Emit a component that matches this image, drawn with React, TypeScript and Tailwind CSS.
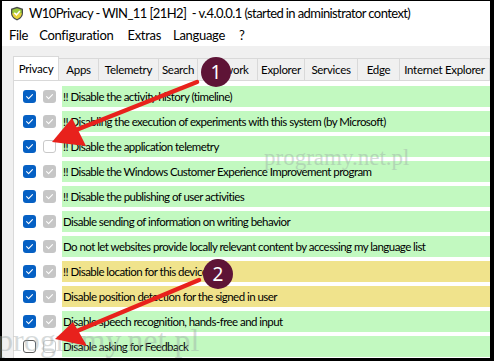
import React from 'react';

type Row = { text: string; color: 'green' | 'yellow'; a: boolean; b: boolean };

const rows: Row[] = [
  { text: '!! Disable the activity history (timeline)', color: 'green', a: true, b: true },
  { text: '!! Disabling the execution of experiments with this system (by Microsoft)', color: 'green', a: true, b: true },
  { text: '!! Disable the application telemetry', color: 'green', a: true, b: false },
  { text: '!! Disable the Windows Customer Experience Improvement program', color: 'green', a: true, b: true },
  { text: '!! Disable the publishing of user activities', color: 'green', a: true, b: true },
  { text: 'Disable sending of information on writing behavior', color: 'green', a: true, b: true },
  { text: 'Do not let websites provide locally relevant content by accessing my language list', color: 'green', a: true, b: true },
  { text: '!! Disable location for this device', color: 'yellow', a: true, b: true },
  { text: 'Disable position detection for the signed in user', color: 'yellow', a: true, b: true },
  { text: 'Disable speech recognition, hands-free and input', color: 'green', a: true, b: true },
  { text: 'Disable asking for Feedback', color: 'green', a: false, b: false },
];

const tabs = [
  { name: 'Apps', w: 'w-[40px]' },
  { name: 'Telemetry', w: 'w-[60px]' },
  { name: 'Search', w: 'w-[39px]' },
  { name: 'Network', w: 'w-[60px]' },
  { name: 'Explorer', w: 'w-[47px]' },
  { name: 'Services', w: 'w-[53px]' },
  { name: 'Edge', w: 'w-[42px]' },
  { name: 'Internet Explorer', w: 'w-[90px]' },
];

const Check = ({ on, gray }: { on: boolean; gray?: boolean }) => {
  if (!on) {
    return <div className={`w-[13px] h-[13px] rounded-[3px] bg-white border ${gray ? 'border-[#c9c9c9]' : 'border-[#5d5d5d]'}`} />;
  }
  return (
    <div className={`w-[13px] h-[13px] rounded-[3px] flex items-center justify-center ${gray ? 'bg-[#c6c6c6]' : 'bg-[#0560c4]'}`}>
      <svg width="9" height="9" viewBox="0 0 10 10">
        <path d="M1.8 5.2 L4 7.3 L8.3 2.8" fill="none" stroke="white" strokeWidth="1.2" strokeLinecap="round" strokeLinejoin="round" />
      </svg>
    </div>
  );
};

const Shield = () => (
  <svg width="14" height="15" viewBox="0 0 14 15">
    <path d="M7 0.8 L13 2.8 V7 C13 10.6 10.4 13 7 14.4 C3.6 13 1 10.6 1 7 V2.8 Z" fill="#4a4a4a" />
    <path d="M7 2.2 L11.7 3.8 V7 C11.7 9.9 9.7 11.9 7 13 C4.3 11.9 2.3 9.9 2.3 7 V3.8 Z" fill="#9cc93a" />
    <path d="M2.3 7 C4 7.4 10 7.4 11.7 7 C11.7 9.9 9.7 11.9 7 13 C4.3 11.9 2.3 9.9 2.3 7 Z" fill="#e9d23a" />
    <path d="M4.3 6.8 L6.4 8.9 L9.9 4.9" fill="none" stroke="white" strokeWidth="1.5" />
  </svg>
);

export default function App() {
  return (
    <div
      className="relative w-[494px] h-[361px] overflow-hidden bg-black pl-[2px] pt-[1px] pr-[4px] pb-[3px]"
      style={{ fontFamily: 'Lato, "Noto Sans", sans-serif' }}
    >
      <div className="w-full h-full bg-[#f0f0f0] flex flex-col overflow-hidden">
        <div className="h-[25px] bg-white flex items-center pl-[8px] gap-[5px] shrink-0">
          <Shield />
          <span className="text-[13px] tracking-[-0.6px] text-black whitespace-nowrap">W10Privacy - WIN_11 [21H2]&nbsp; - v.4.0.0.1 (started in administrator context)</span>
        </div>
        <div className="h-[20px] bg-white flex items-center text-[13px] tracking-[-0.3px] text-black shrink-0">
          <span className="ml-[7px]">File</span>
          <span className="ml-[11px]">Configuration</span>
          <span className="ml-[14px]">Extras</span>
          <span className="ml-[12px]">Language</span>
          <span className="ml-[14px]">?</span>
        </div>
        <div className="flex-1 flex flex-col pl-[11px] pt-[10px]">
          <div className="flex items-end h-[24px] text-[11.5px] tracking-[-0.3px] text-black shrink-0">
            <div className="h-[24px] w-[49px] bg-white border border-b-0 border-[#d9d9d9] flex items-center justify-center">Privacy</div>
            {tabs.map((t) => (
              <div key={t.name} className={`h-[22px] ${t.w} shrink-0 border-r border-t border-[#d9d9d9] flex items-center justify-center bg-[#f0f0f0] whitespace-nowrap`}>
                {t.name}
              </div>
            ))}
          </div>
          <div className="flex-1 bg-white border-l border-t border-[#d9d9d9] pt-[5px] flex flex-col gap-[4px] text-[11.5px] tracking-[-0.55px] text-black">
            {rows.map((r) => (
              <div key={r.text} className="h-[21px] flex items-center shrink-0">
                <div className="w-[48px] flex items-center pl-[9px] gap-[7px] shrink-0">
                  <Check on={r.a} />
                  <Check on={r.b} gray />
                </div>
                <div className={`flex-1 h-full flex items-center pl-[1px] whitespace-nowrap ${r.color === 'green' ? 'bg-[#c2f9c0]' : 'bg-[#f0e38c]'}`}>
                  {r.text}
                </div>
              </div>
            ))}
          </div>
        </div>
      </div>

      <div className="absolute left-[264px] top-[146px] text-[23px] leading-none text-[#9aa5a5] opacity-40 whitespace-nowrap" style={{ fontFamily: '"Liberation Serif", serif' }}>
        programy.net.pl
      </div>
      <div className="absolute left-[-3px] top-[324px] text-[32px] leading-none text-[#9aa5a5] opacity-40 whitespace-nowrap" style={{ fontFamily: '"Liberation Serif", serif' }}>
        programy.net.pl
      </div>

      <svg className="absolute inset-0" width="494" height="361" viewBox="0 0 494 361">
        <line x1="197" y1="82" x2="76" y2="130" stroke="#e8211c" strokeWidth="4.5" strokeLinecap="round" />
        <polygon points="52,142 72,118 86,146" fill="#e8211c" />
        <line x1="199" y1="280" x2="77" y2="331" stroke="#e8211c" strokeWidth="4.5" strokeLinecap="round" />
        <polygon points="55,339 73,322 87,346" fill="#e8211c" />
        <circle cx="216" cy="72" r="15" fill="#5e1436" />
        <text x="216" y="79" textAnchor="middle" fontSize="19" fill="white" fontFamily="Noto Sans, sans-serif">1</text>
        <circle cx="218" cy="274" r="15" fill="#5e1436" />
        <text x="218" y="281" textAnchor="middle" fontSize="19" fill="white" fontFamily="Noto Sans, sans-serif">2</text>
      </svg>
    </div>
  );
}
